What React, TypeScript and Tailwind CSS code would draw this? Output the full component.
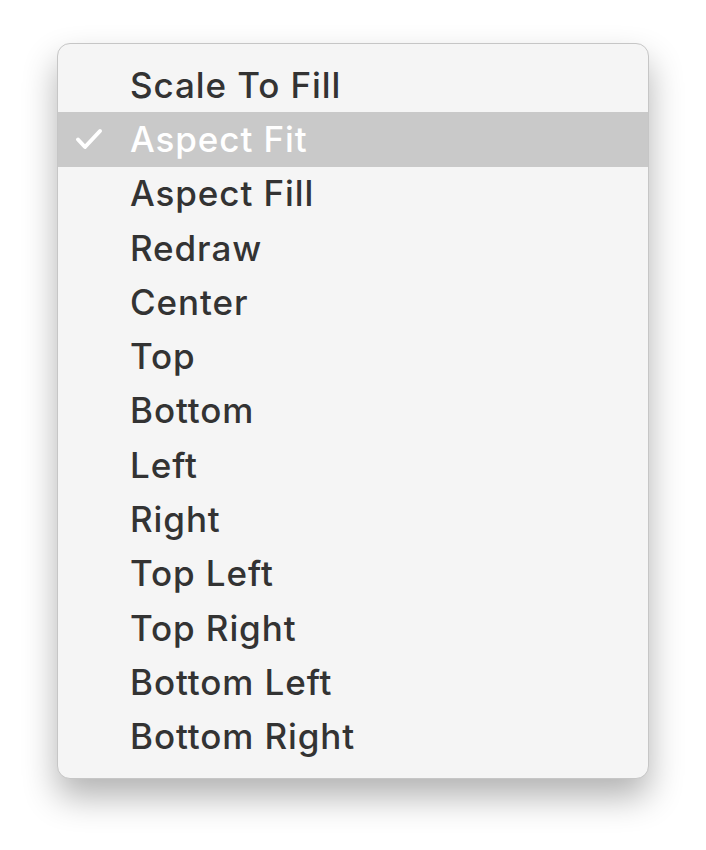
const items = [
  "Scale To Fill",
  "Aspect Fit",
  "Aspect Fill",
  "Redraw",
  "Center",
  "Top",
  "Bottom",
  "Left",
  "Right",
  "Top Left",
  "Top Right",
  "Bottom Left",
  "Bottom Right",
]

const selected = "Aspect Fit"

function Check() {
  return (
    <svg width="28" height="22" viewBox="0 0 28 22" className="shrink-0">
      <path d="M3 11.5 L10 19 L25 3" fill="none" stroke="white" strokeWidth="4" strokeLinecap="round" strokeLinejoin="round" />
    </svg>
  )
}

export default function App() {
  return (
    <div className="w-[706px] h-[850px] bg-white pt-[43px] pl-[57px]">
      <div className="w-[592px] rounded-[13px] bg-[#f5f5f5] border border-[#c6c6c6] py-[14px] shadow-[0_18px_34px_rgba(0,0,0,0.3)] overflow-hidden">
        {items.map((item) => {
          const active = item === selected
          return (
            <div
              key={item}
              className={`flex items-center h-[54.3px] ${active ? "bg-[#c9c9c9] text-white" : "text-[#333333]"}`}
            >
              <div className="w-[72px] flex justify-end pr-[27px]">{active && <Check />}</div>
              <span className="font-['Inter',sans-serif] font-medium text-[35px] leading-none tracking-[0.9px]">{item}</span>
            </div>
          )
        })}
      </div>
    </div>
  )
}
